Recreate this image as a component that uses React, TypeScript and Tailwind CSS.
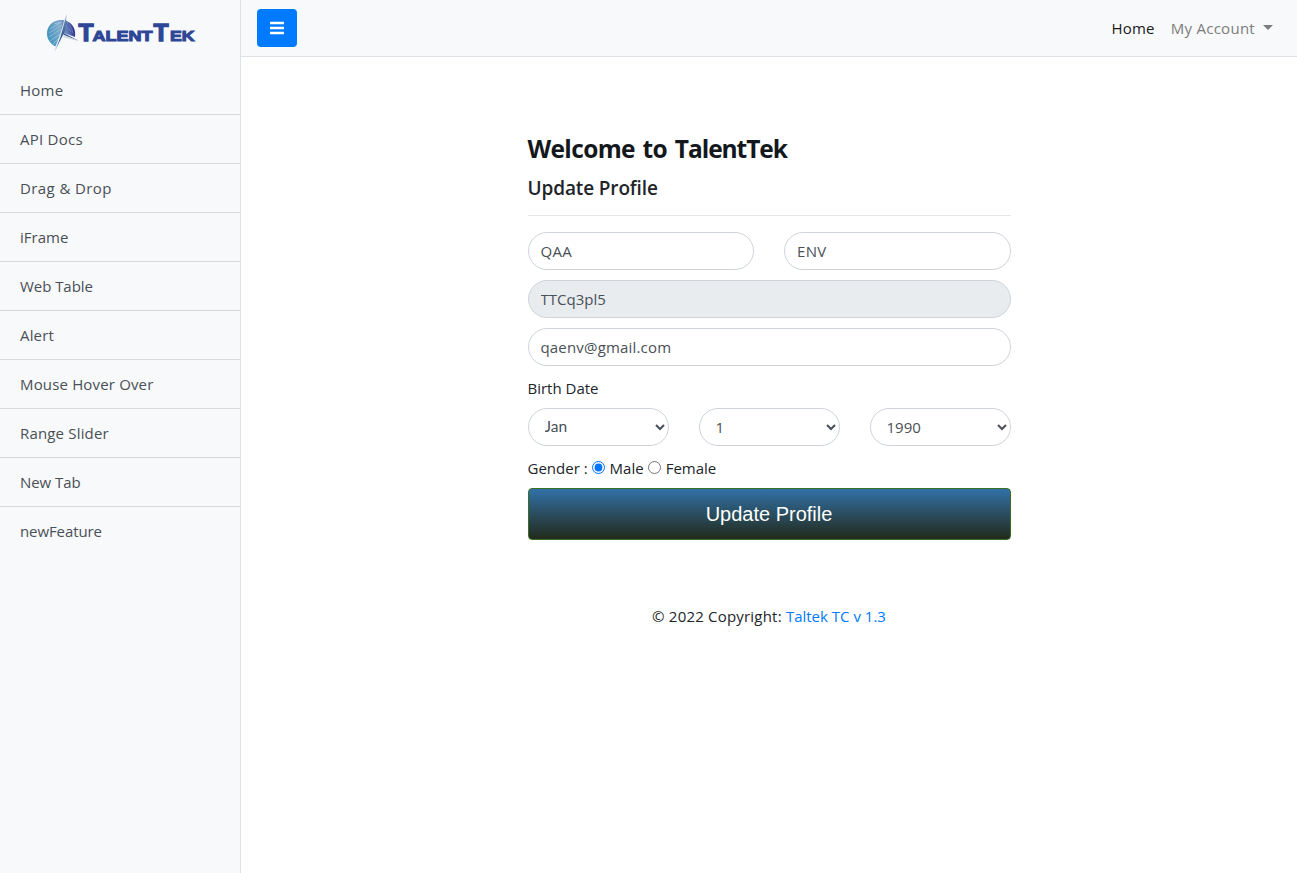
import type { ReactNode } from "react";

const links: { label: string; cls: string }[] = [
  { label: "Home", cls: "tracking-[0.25px]" },
  { label: "API Docs", cls: "tracking-[0.25px]" },
  { label: "Drag & Drop", cls: "tracking-[0.4px]" },
  { label: "iFrame", cls: "tracking-[0px]" },
  { label: "Web Table", cls: "tracking-[-0.05px]" },
  { label: "Alert", cls: "tracking-[0.15px]" },
  { label: "Mouse Hover Over", cls: "tracking-[0.16px]" },
  { label: "Range Slider", cls: "tracking-[0.17px]" },
  { label: "New Tab", cls: "tracking-[-0.05px]" },
  { label: "newFeature", cls: "tracking-[-0.1px]" },
];

function Logo() {
  return (
    <svg width="152" height="40" viewBox="0 0 152 40" className="ml-[45px] mt-[13px] block shrink-0">
      <defs>
        <linearGradient id="globe" x1="0" y1="0.6" x2="1" y2="0.4">
          <stop offset="0" stopColor="#3f93bd" />
          <stop offset="0.5" stopColor="#7fa9cc" />
          <stop offset="0.75" stopColor="#5f74b4" />
          <stop offset="1" stopColor="#25308a" />
        </linearGradient>
        <linearGradient id="needle" x1="0.5" y1="0" x2="0.3" y2="1">
          <stop offset="0" stopColor="#6b8fae" />
          <stop offset="0.5" stopColor="#3a5f96" />
          <stop offset="1" stopColor="#3f8fbd" />
        </linearGradient>
      </defs>
      <path d="M16 7C7 7 2 13.500 2 20.500c0 6 3.500 10.500 8.500 13L15 23l4-3 11 4c1.500-9-4-17-14-17z" fill="url(#globe)" />
      <path d="M5 16 17 9M4 20l13-8M4 24l12-8M5 28l10-7M8 31l6-6M9 11l8-2" stroke="#c2dbe8" strokeWidth=".7" opacity=".7" />
      <path d="M22 9c3 3 5 7 6 11M21 13c3 2 4 4 5 6" stroke="#8090c8" strokeWidth=".6" fill="none" />
      <path d="M21.500 1 20.500 17 9.500 39l7-18z" fill="url(#needle)" />
      <path d="M20.500 4 16 20 10 37" stroke="#d9e9f1" strokeWidth=".9" fill="none" />
      <path d="M17 19 34 28 19 22z" fill="#42598f" />
      <path d="M19 22 33 28 18 24z" fill="#c5d5e5" />
      <g fill="#2d4696" stroke="#2d4696" strokeLinejoin="miter" fontFamily="Liberation Sans, sans-serif" fontWeight="700">
        <text x="33.500" y="28.200" fontSize="23.500" strokeWidth="1.300" textLength="15" lengthAdjust="spacingAndGlyphs">T</text>
        <text x="47.500" y="28.200" fontSize="15.500" strokeWidth="1.100" textLength="60" lengthAdjust="spacingAndGlyphs">ALENT</text>
        <text x="108.500" y="28.200" fontSize="23.500" strokeWidth="1.300" textLength="15" lengthAdjust="spacingAndGlyphs">T</text>
        <text x="125" y="28.200" fontSize="15.500" strokeWidth="1.100" textLength="24.500" lengthAdjust="spacingAndGlyphs">EK</text>
      </g>
    </svg>
  );
}

const field =
  "block h-[38px] w-full rounded-full border border-[#ced4da] px-3 text-[#495057] outline-none";

function Select({ value, cls = "" }: { value: string; cls?: string }) {
  return (
    <select className={field + " flex-1 bg-white pr-[13px] " + cls} defaultValue={value}>
      <option>{value}</option>
    </select>
  );
}

function Radio({ checked, children }: { checked?: boolean; children: ReactNode }) {
  return (
    <label className="flex items-center">
      <input type="radio" name="gender" defaultChecked={checked} className="mr-[5px] -mt-0.5 size-[13px]" />
      {children}
    </label>
  );
}

export default function App() {
  return (
    <div className="flex h-[873px] w-full overflow-hidden bg-white font-['Open_Sans','Noto_Sans',sans-serif] text-[15px] leading-6 text-[#212529]">
      <aside className="flex w-[241px] shrink-0 flex-col border-r border-[#dee2e6] bg-[#f8f9fa]">
        <div className="h-[66px]">
          <Logo />
        </div>
        <nav>
          {links.map((l, i) => (
            <a
              key={l.label}
              href="#"
              className={
                "block h-[49px] px-5 py-3 text-[#495057] " +
                l.cls +
                (i < links.length - 1 ? " border-b border-[#d6d8db]" : "")
              }
            >
              {l.label}
            </a>
          ))}
        </nav>
      </aside>
      <div className="flex min-w-0 flex-1 flex-col">
        <header className="flex h-[57px] items-center border-b border-[#dee2e6] bg-[#f8f9fa] pl-4 pr-6">
          <button className="flex h-[38px] w-10 items-center justify-center rounded bg-[#007bff]">
            <svg width="14" height="14" viewBox="0 0 14 14" fill="#fff">
              <rect y=".7" width="14" height="2.500" rx=".4" />
              <rect y="5.700" width="14" height="2.500" rx=".4" />
              <rect y="10.700" width="14" height="2.500" rx=".4" />
            </svg>
          </button>
          <div className="ml-auto flex items-center gap-4">
            <a href="#" className="tracking-[0.2px] text-[#191919]">Home</a>
            <a href="#" className="flex items-center tracking-[0.28px] text-[#7c7d7d]">
              My Account
              <span className="ml-2 -mt-0.5 border-x-[5px] border-t-[5px] border-x-transparent border-t-[#7c7d7d]" />
            </a>
          </div>
        </header>
        <main className="mx-auto w-[483px] pt-[74px]">
          <h1 className="text-[24.5px] font-bold leading-9 tracking-[-0.65px] text-[#14181d] [word-spacing:2px]">
            Welcome to <span className="tracking-[-1.05px]">TalentTek</span>
          </h1>
          <h2 className="mt-[9px] text-[19px] font-semibold leading-6 tracking-[-0.13px]">Update Profile</h2>
          <hr className="mb-4 mt-[15px] border-[#e5e5e5]" />
          <div className="flex gap-[30px]">
            <input className={field + " tracking-[0.3px]"} defaultValue="QAA" />
            <input className={field + " tracking-[0.3px]"} defaultValue="ENV" />
          </div>
          <input className={field + " mt-2.5 bg-[#e9ecef]"} readOnly defaultValue="TTCq3pl5" />
          <input className={field + " mt-2.5 tracking-[0.18px]"} defaultValue="qaenv@gmail.com" />
          <div className="mt-2.5">Birth Date</div>
          <div className="mt-2 flex gap-[30px]">
            <Select value="Jan" cls="pb-0.5 font-['Lato',sans-serif] text-[15.5px]" />
            <Select value="1" />
            <Select value="1990" />
          </div>
          <div className="mt-2.5 flex gap-1">
            <span>Gender :</span>
            <Radio checked>Male</Radio>
            <Radio>Female</Radio>
          </div>
          <button className="mt-2 block h-[52px] w-full rounded-[4px] border border-[#3b6e22] bg-linear-to-b from-[#3071a9] to-[#212a1c] font-['Liberation_Sans',sans-serif] text-[20px] text-white">
            Update Profile
          </button>
          <footer className="mt-16 text-center">
            <span className="tracking-[0.2px]">© 2022 Copyright: </span>
            <a href="#" className="text-[#007bff]">Taltek TC v 1.3</a>
          </footer>
        </main>
      </div>
    </div>
  );
}
